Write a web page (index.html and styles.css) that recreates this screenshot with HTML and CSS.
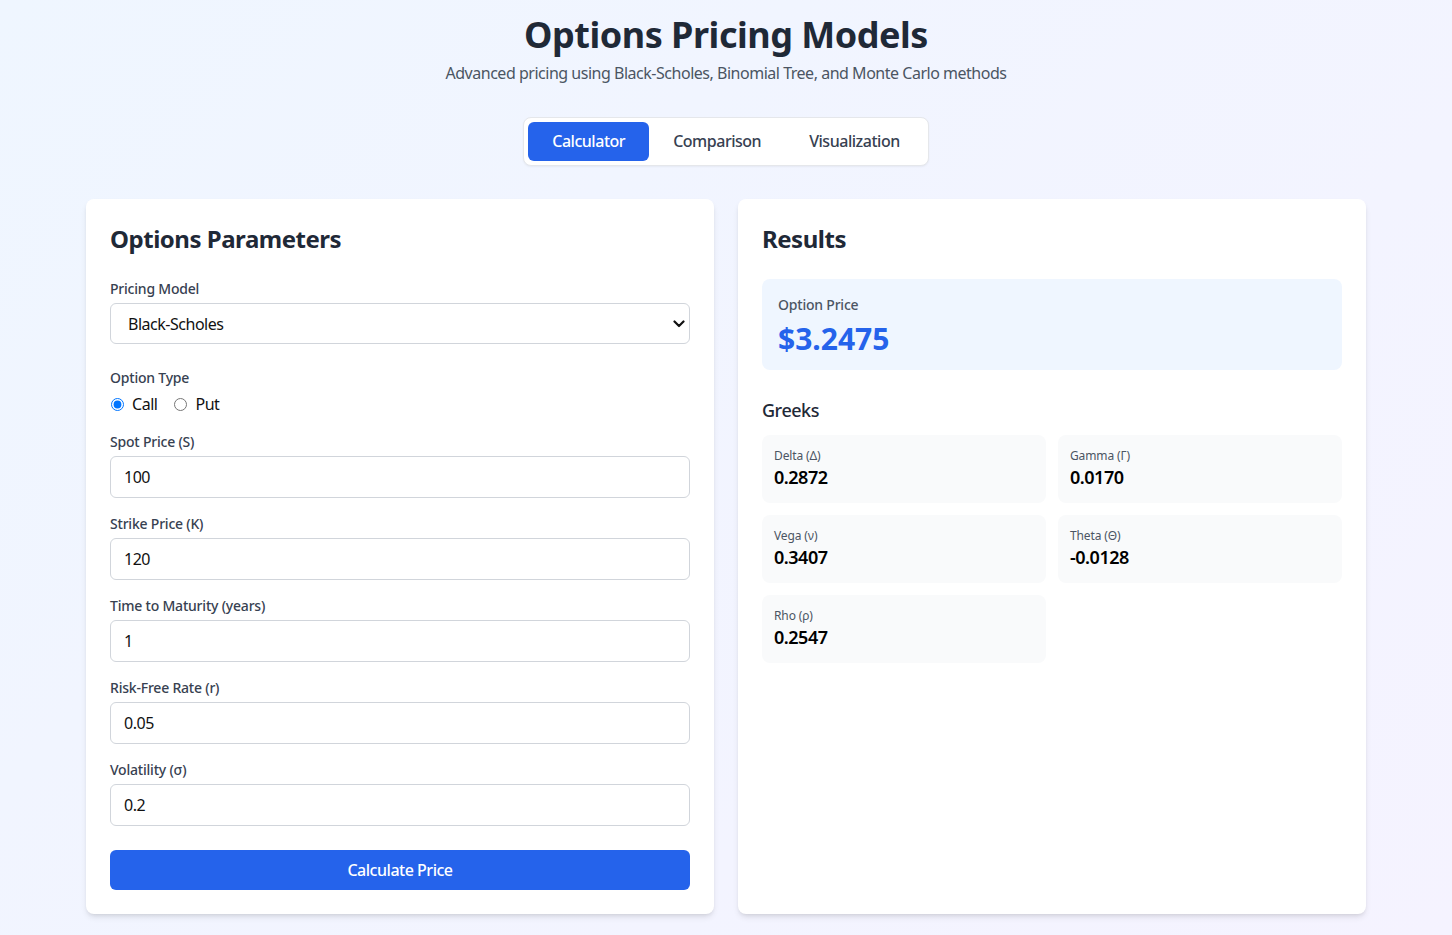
FILE: index.html
```html
<!DOCTYPE html>
<html lang="en">
<head>
<meta charset="utf-8">
<title>Options Pricing Models</title>
<link rel="stylesheet" href="styles.css">
</head>
<body>
<div class="page">
  <header class="header">
    <h1 class="title">Options Pricing Models</h1>
    <p class="subtitle">Advanced pricing using Black-Scholes, Binomial Tree, and Monte Carlo methods</p>
  </header>

  <nav class="tabs-wrap">
    <div class="tabs">
      <button class="tab tab-active">Calculator</button>
      <button class="tab">Comparison</button>
      <button class="tab">Visualization</button>
    </div>
  </nav>

  <main class="grid">
    <section class="card">
      <h2 class="card-title">Options Parameters</h2>

      <div class="field field-select">
        <label class="label">Pricing Model</label>
        <div class="select-wrap">
          <select class="select">
            <option>Black-Scholes</option>
            <option>Binomial Tree</option>
            <option>Monte Carlo</option>
          </select>
          <svg class="chevron" width="12" height="8" viewBox="0 0 12 8"><path d="M1.5 1.5 L6 6 L10.5 1.5" fill="none" stroke="#111" stroke-width="2.2" stroke-linecap="round" stroke-linejoin="round"/></svg>
        </div>
      </div>

      <div class="field">
        <label class="label">Option Type</label>
        <div class="radios">
          <label class="radio"><input type="radio" name="type" checked> <span>Call</span></label>
          <label class="radio"><input type="radio" name="type"> <span>Put</span></label>
        </div>
      </div>

      <div class="field">
        <label class="label">Spot Price (S)</label>
        <input class="input" type="text" value="100">
      </div>
      <div class="field">
        <label class="label">Strike Price (K)</label>
        <input class="input" type="text" value="120">
      </div>
      <div class="field">
        <label class="label">Time to Maturity (years)</label>
        <input class="input" type="text" value="1">
      </div>
      <div class="field">
        <label class="label">Risk-Free Rate (r)</label>
        <input class="input" type="text" value="0.05">
      </div>
      <div class="field">
        <label class="label">Volatility (σ)</label>
        <input class="input" type="text" value="0.2">
      </div>

      <button class="btn-primary">Calculate Price</button>
    </section>

    <section class="card">
      <h2 class="card-title">Results</h2>
      <div class="price-box">
        <div class="price-label">Option Price</div>
        <div class="price-value">$3.2475</div>
      </div>

      <h3 class="greeks-title">Greeks</h3>
      <div class="greeks">
        <div class="greek"><div class="greek-label">Delta (Δ)</div><div class="greek-value">0.2872</div></div>
        <div class="greek"><div class="greek-label">Gamma (Γ)</div><div class="greek-value">0.0170</div></div>
        <div class="greek"><div class="greek-label">Vega (ν)</div><div class="greek-value">0.3407</div></div>
        <div class="greek"><div class="greek-label">Theta (Θ)</div><div class="greek-value">-0.0128</div></div>
        <div class="greek"><div class="greek-label">Rho (ρ)</div><div class="greek-value">0.2547</div></div>
      </div>
    </section>
  </main>
</div>
</body>
</html>
```

FILE: styles.css
```css
* { box-sizing: border-box; }

html, body {
  margin: 0;
  padding: 0;
}

body {
  font-family: "Noto Sans", "Open Sans", sans-serif;
  letter-spacing: -0.03em;
  color: #1f2937;
  background: linear-gradient(135deg, #eff6ff 0%, #f5f3ff 100%);
  min-height: 935px;
}

.page {
  width: 1280px;
  margin: 0 auto;
  padding-top: 15px;
}

.header {
  text-align: center;
  margin-bottom: 32px;
}

.title {
  margin: 0 0 6px;
  font-size: 36px;
  line-height: 40px;
  font-weight: 700;
  color: #1f2937;
}

.subtitle {
  margin: 0;
  font-size: 16px;
  line-height: 24px;
  color: #4b5563;
}

.tabs-wrap {
  display: flex;
  justify-content: center;
  margin-bottom: 33px;
}

.tabs {
  display: flex;
  background: #fff;
  border: 1px solid #e5e7eb;
  border-radius: 8px;
  padding: 4px;
  box-shadow: 0 1px 2px rgba(0,0,0,0.05);
}

.tab {
  font-family: inherit;
  letter-spacing: inherit;
  font-size: 16px;
  font-weight: 500;
  line-height: 24px;
  padding: 7px 24px 8px;
  border: none;
  background: transparent;
  color: #374151;
  border-radius: 6px;
  cursor: pointer;
}

.tab-active {
  background: #2563eb;
  color: #fff;
}

.grid {
  display: grid;
  grid-template-columns: 1fr 1fr;
  gap: 24px;
}

.card {
  background: #fff;
  border-radius: 8px;
  box-shadow: 0 4px 6px -1px rgba(0,0,0,0.1), 0 2px 4px -2px rgba(0,0,0,0.1);
  padding: 24px;
}

.card-title {
  margin: 0 0 24px;
  font-size: 24px;
  line-height: 32px;
  font-weight: 700;
  color: #1f2937;
}

.field {
  margin-bottom: 16px;
}

.field-select {
  margin-bottom: 24px;
}

.label {
  display: block;
  font-size: 14px;
  line-height: 20px;
  font-weight: 500;
  letter-spacing: -0.015em;
  color: #374151;
  margin-bottom: 4px;
}

.select-wrap {
  position: relative;
}

.select {
  width: 100%;
  height: 41px;
  appearance: none;
  -webkit-appearance: none;
  font-family: inherit;
  letter-spacing: inherit;
  font-size: 16px;
  color: #111;
  background: #fff;
  border: 1px solid #d1d5db;
  border-radius: 6px;
  padding: 0 17px;
}

.chevron {
  position: absolute;
  right: 5px;
  top: 17px;
}

.radios {
  display: flex;
  gap: 16px;
  height: 24px;
  align-items: center;
}

.radio {
  display: flex;
  align-items: center;
  font-size: 16px;
  color: #111;
}

.radio input {
  margin: 0 8px 0 1px;
  width: 13px;
  height: 13px;
}

.input {
  display: block;
  width: 100%;
  height: 42px;
  font-family: inherit;
  letter-spacing: inherit;
  font-size: 16px;
  color: #111;
  border: 1px solid #d1d5db;
  border-radius: 6px;
  padding: 8px 13px;
  background: #fff;
}

.btn-primary {
  display: block;
  width: 100%;
  height: 40px;
  margin-top: 24px;
  font-family: inherit;
  letter-spacing: inherit;
  font-size: 16px;
  font-weight: 500;
  color: #fff;
  background: #2563eb;
  border: none;
  border-radius: 6px;
  cursor: pointer;
}

.price-box {
  background: #eff6ff;
  border-radius: 8px;
  padding: 16px 16px 13px;
  margin-bottom: 26px;
}

.price-label {
  font-size: 14px;
  line-height: 20px;
  color: #4b5563;
  font-weight: 500;
  letter-spacing: -0.015em;
}

.price-value {
  font-size: 30px;
  line-height: 36px;
  font-weight: 700;
  letter-spacing: 0;
  color: #2563eb;
  margin-top: 6px;
}

.greeks-title {
  margin: 0 0 11px;
  font-size: 18px;
  line-height: 28px;
  font-weight: 500;
  color: #1f2937;
}

.greeks {
  display: grid;
  grid-template-columns: 1fr 1fr;
  gap: 12px;
}

.greek {
  background: #f9fafb;
  border-radius: 8px;
  padding: 12px;
}

.greek-label {
  font-size: 12px;
  line-height: 15px;
  letter-spacing: -0.01em;
  color: #4b5563;
  padding-top: 1px;
}

.greek-value {
  font-size: 18px;
  line-height: 28px;
  font-weight: 600;
  color: #000;
}
```
